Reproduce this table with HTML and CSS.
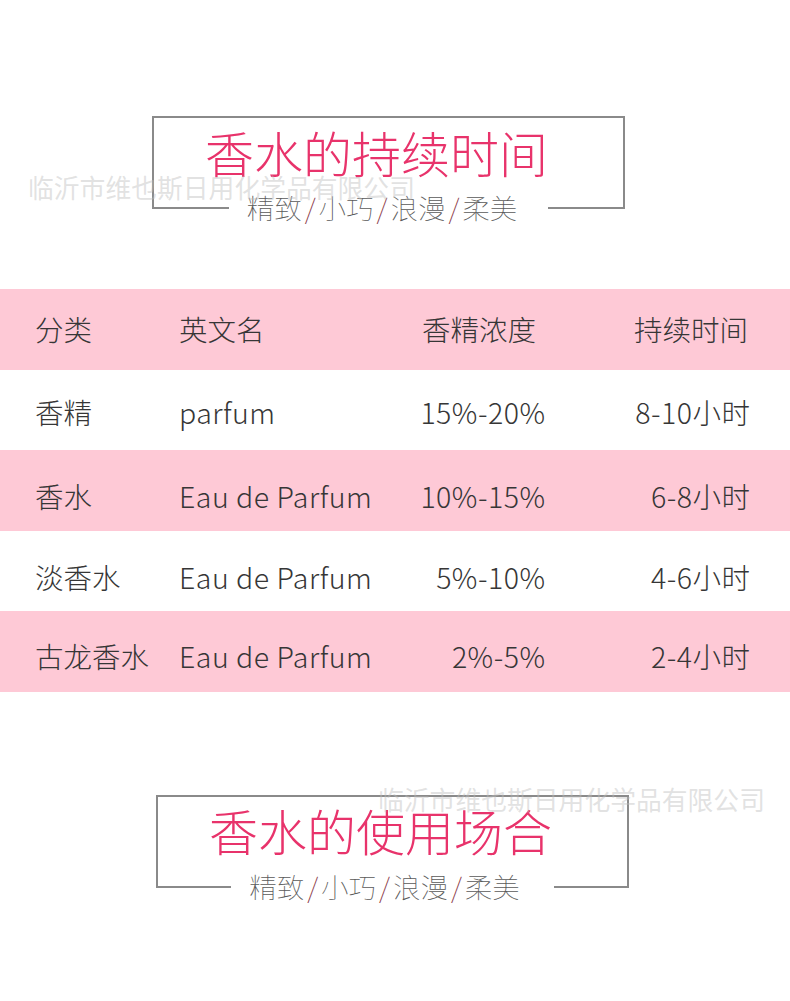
FILE: index.html
```html
<!DOCTYPE html>
<html lang="zh-CN">
<head>
<meta charset="utf-8">
<title>香水的持续时间</title>
<link rel="stylesheet" href="styles.css">
</head>
<body>
<div class="page">
  <section class="heading heading-top">
    <div class="box">
      <div class="title">香水的持续时间</div>
      <div class="subtitle">精致<span class="slash">/</span>小巧<span class="slash">/</span>浪漫<span class="slash">/</span>柔美</div>
    </div>
  </section>

  <div class="watermark wm-1">临沂市维也斯日用化学品有限公司</div>

  <section class="table">
    <div class="row pink head">
      <div class="c1">分类</div>
      <div class="c2">英文名</div>
      <div class="c3 h3">香精浓度</div>
      <div class="c4 h4">持续时间</div>
    </div>
    <div class="row r2">
      <div class="c1">香精</div>
      <div class="c2 num">parfum</div>
      <div class="c3 num">15%-20%</div>
      <div class="c4 num">8-10小时</div>
    </div>
    <div class="row pink r3">
      <div class="c1">香水</div>
      <div class="c2 num">Eau de Parfum</div>
      <div class="c3 num">10%-15%</div>
      <div class="c4 num">6-8小时</div>
    </div>
    <div class="row r4">
      <div class="c1">淡香水</div>
      <div class="c2 num">Eau de Parfum</div>
      <div class="c3 num">5%-10%</div>
      <div class="c4 num">4-6小时</div>
    </div>
    <div class="row pink r5">
      <div class="c1">古龙香水</div>
      <div class="c2 num">Eau de Parfum</div>
      <div class="c3 num">2%-5%</div>
      <div class="c4 num">2-4小时</div>
    </div>
  </section>

  <section class="heading heading-bottom">
    <div class="box">
      <div class="title">香水的使用场合</div>
      <div class="subtitle">精致<span class="slash">/</span>小巧<span class="slash">/</span>浪漫<span class="slash">/</span>柔美</div>
    </div>
  </section>

  <div class="watermark wm-2">临沂市维也斯日用化学品有限公司</div>
</div>
</body>
</html>
```

FILE: styles.css
```css
html, body {
  margin: 0;
  padding: 0;
  background: #ffffff;
}

body {
  font-family: "Noto Sans CJK SC", "Noto Sans", sans-serif;
  color: #3a3a3a;
}

.page {
  position: relative;
  width: 790px;
  height: 1001px;
  overflow: hidden;
}

.heading-top {
  padding-top: 116px;
}

.heading-bottom {
  padding-top: 103px;
}

.box {
  box-sizing: border-box;
  width: 473px;
  height: 93px;
  border: 2px solid #8a8a8a;
  display: flex;
  flex-direction: column;
  align-items: center;
}

.heading-top .box {
  margin-left: 152px;
}

.heading-bottom .box {
  margin-left: 156px;
}

.title {
  font-size: 49px;
  line-height: 1;
  font-weight: 300;
  color: #e8336b;
  margin-top: 9px;
  padding-right: 24px;
  white-space: nowrap;
}

.heading-bottom .title {
  margin-top: 8px;
}

.subtitle {
  margin-top: auto;
  margin-bottom: -14px;
  background: #ffffff;
  padding: 0 31px 0 18px;
  font-size: 27.5px;
  line-height: 27px;
  font-weight: 100;
  color: #5a5a5a;
  white-space: nowrap;
}

.heading-bottom .subtitle {
  padding: 0 34px 0 18px;
}

.slash {
  color: #8b3a48;
  margin: 0 3px;
}

.watermark {
  position: absolute;
  font-size: 25.8px;
  line-height: 1;
  font-weight: 400;
  color: rgba(190, 190, 190, 0.45);
  white-space: nowrap;
}

.wm-1 {
  left: 28px;
  top: 174px;
}

.wm-2 {
  left: 378px;
  top: 786px;
}

.table {
  margin-top: 80px;
}

.row {
  box-sizing: border-box;
  display: grid;
  grid-template-columns: 144px 222px 144px 205px;
  align-items: center;
  padding-left: 35px;
  height: 80px;
  font-size: 28.5px;
  line-height: 1;
  font-weight: 300;
  color: #363636;
  white-space: nowrap;
}

.row.pink {
  background: #fec9d6;
  height: 81px;
}

.r2 {
  padding-top: 4px;
}

.r3 {
  padding-top: 12px;
}

.r4 {
  padding-top: 12px;
}

.r5 {
  padding-top: 10px;
}

.num {
  letter-spacing: 0.5px;
}

.c3, .c4 {
  text-align: right;
}

.c3.num, .c4.num {
  margin-right: -0.5px;
}

.h3 {
  padding-right: 9px;
}

.h4 {
  padding-right: 2px;
}
```
